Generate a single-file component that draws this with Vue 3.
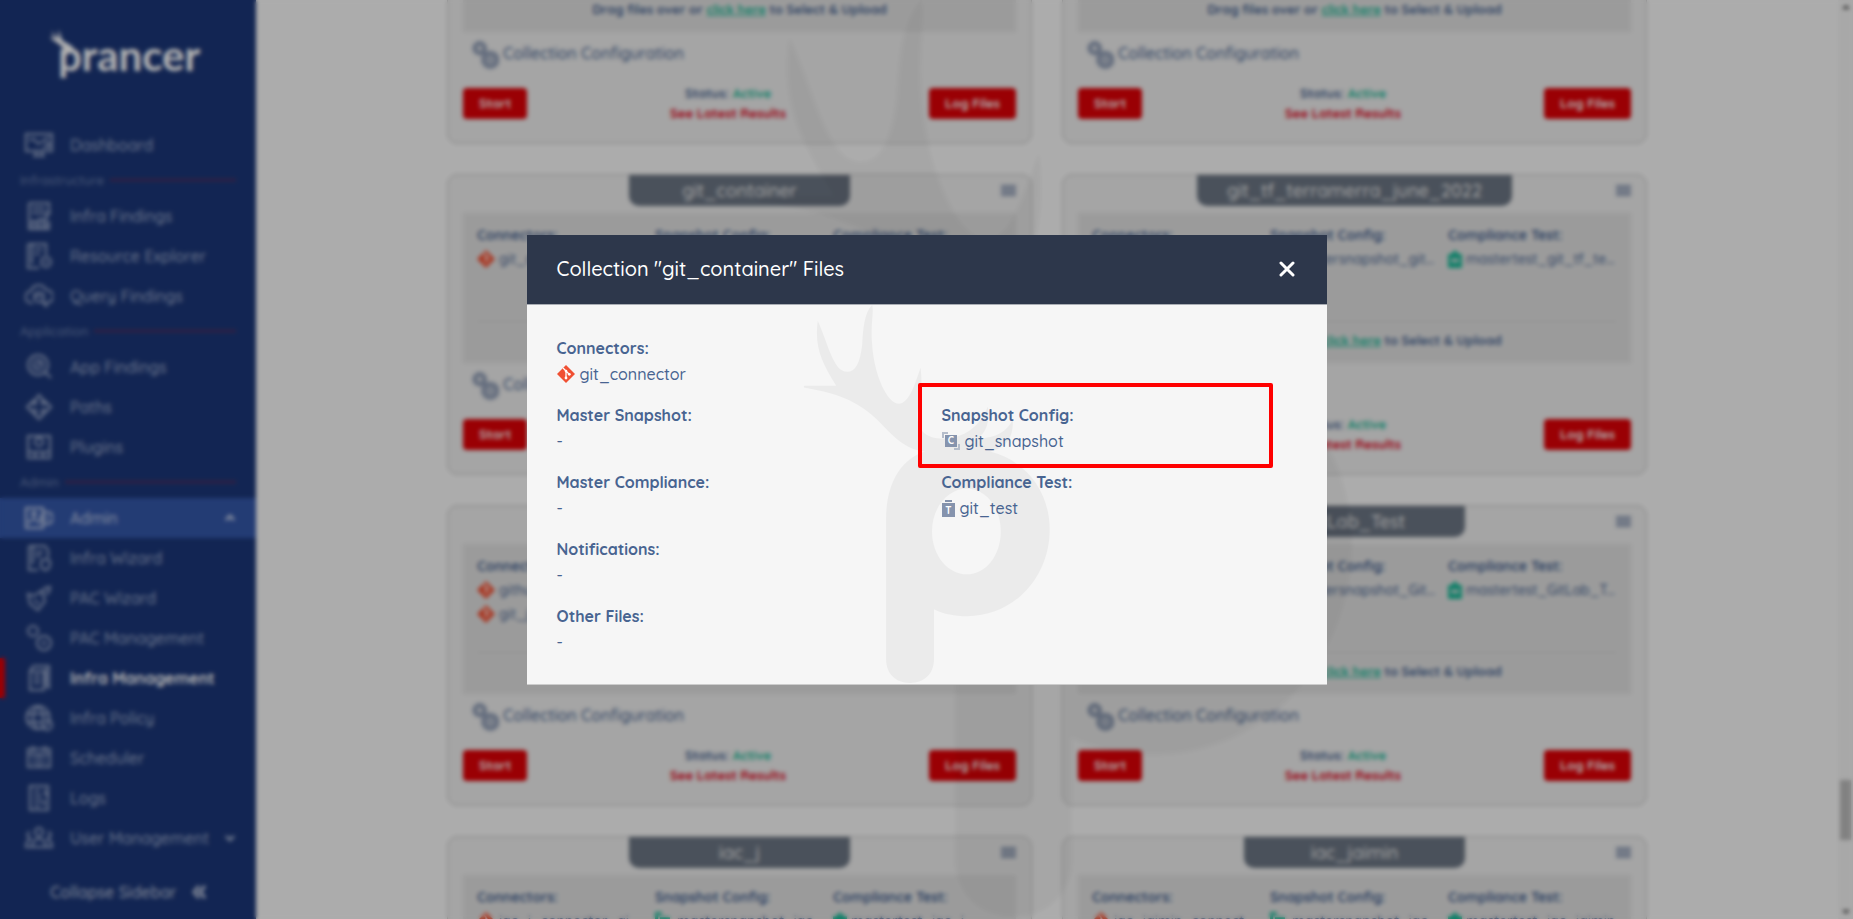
<template>
  <div class="page">
    <aside class="sidebar">
      <div class="brand">
        <svg class="antler" viewBox="0 0 26 26" aria-hidden="true">
          <path d="M0 7L6 8C3 6 2 4 2 1C4 4 6 7 9 8C8 5 8 3 9 0C10 4 11 8 13 11C17 13 21 15 24 18L17 23C14 18 10 15 6 12C3 10 1 9 0 7Z"/>
        </svg>
        <span class="brand-name">prancer</span>
      </div>

      <nav class="nav">
        <template v-for="(n, i) in nav" :key="i">
          <div v-if="n.section" class="nav-section">
            <span>{{ n.section }}</span><hr/>
          </div>
          <a v-else href="#" class="nav-item" :class="{ open: n.open, current: n.current }">
            <svg class="nav-icon" viewBox="0 0 28 28" aria-hidden="true"><path :d="icons[n.icon]"/></svg>
            <span>{{ n.label }}</span>
            <svg v-if="n.arrow" class="nav-arrow" viewBox="0 0 12 12" aria-hidden="true">
              <path :d="n.arrow === 'up' ? 'M2 8L6 4L10 8' : 'M2 4L6 8L10 4'"/>
            </svg>
          </a>
        </template>
      </nav>

      <button type="button" class="collapse">
        Collapse Sidebar
        <svg viewBox="0 0 14 14" aria-hidden="true"><path d="M7 1L2 7L7 13M13 1L8 7L13 13"/></svg>
      </button>
    </aside>

    <main class="main">
      <div class="cards">
        <article v-for="(c, i) in cards" :key="i" class="card">
          <header class="card-head">
            <h2 class="card-title">{{ c.title }}</h2>
            <button type="button" class="menu" aria-label="Menu"><i></i><i></i><i></i></button>
          </header>

          <div class="files">
            <div class="file-cols">
              <div v-for="col in c.cols" :key="col.label">
                <h3>{{ col.label }}</h3>
                <p v-for="f in col.files" :key="f">
                  <svg v-if="col.kind === 'git'" class="git" viewBox="0 0 18 18" aria-hidden="true">
                    <path class="git-bg" d="M9 0L18 9L9 18L0 9Z"/>
                    <path class="git-line" d="M7 3L9 5V13M9 6L12 9"/>
                  </svg>
                  <svg v-else-if="col.kind === 'snap'" class="green" viewBox="0 0 18 18" aria-hidden="true">
                    <path d="M0 0H7V3H3V9H0ZM5 5H15V15H5ZM17 11V17H11V16H16V11Z"/>
                  </svg>
                  <svg v-else class="green narrow" viewBox="0 0 14 18" aria-hidden="true">
                    <path fill-rule="evenodd" d="M7 0L11 4H14V18H0V4H3ZM3 9V12H11V9Z"/>
                  </svg>
                  {{ f }}
                </p>
              </div>
            </div>
            <p class="drop">Drag files over or <a href="#">click here</a> to Select &amp; Upload</p>
          </div>

          <div class="config">
            <svg viewBox="0 0 28 28" aria-hidden="true"><path :d="icons.gears"/></svg>
            Collection Configuration
          </div>

          <footer class="card-foot">
            <button type="button" class="btn">Start</button>
            <div class="status">
              <div>Status: <b>Active</b></div>
              <a href="#">See Latest Results</a>
            </div>
            <button type="button" class="btn">Log Files</button>
          </footer>
        </article>
      </div>
      <svg class="watermark" viewBox="804 305 246 380" aria-hidden="true"><path fill-rule="evenodd" :d="deer"/></svg>
    </main>

    <div class="scrollbar" aria-hidden="true">
      <span class="up"></span>
      <span class="thumb"></span>
      <span class="down"></span>
    </div>

    <div class="overlay">
      <section class="modal" role="dialog" aria-labelledby="modal-title">
        <header class="modal-head">
          <h1 id="modal-title">Collection "git_container" Files</h1>
          <button type="button" class="close" aria-label="Close">
            <svg viewBox="0 0 16 16"><path d="M2 2L14 14M14 2L2 14"/></svg>
          </button>
        </header>
        <div class="modal-body">
          <svg class="watermark" viewBox="804 305 246 380" aria-hidden="true"><path fill-rule="evenodd" :d="deer"/></svg>
          <div v-for="g in groups" :key="g.label" class="group" :class="[g.side, { marked: g.marked }]">
            <h2>{{ g.label }}</h2>
            <p>
              <svg v-if="g.kind === 'git'" class="git" viewBox="0 0 18 18" aria-hidden="true">
                <path class="git-bg" d="M9 0L18 9L9 18L0 9Z"/>
                <path class="git-line" d="M6 3L9 6V13M9 6L12 9"/>
                <circle cx="9" cy="6" r="1.3"/><circle cx="9" cy="13" r="1.4"/><circle cx="12.3" cy="9.3" r="1.4"/>
              </svg>
              <svg v-else-if="g.kind === 'snap'" class="snap" viewBox="0 0 18 18" aria-hidden="true">
                <path class="corner" d="M1 6V1H6M12 17H17V12"/>
                <path d="M3 3H15V15H3Z"/>
                <text x="9" y="12">C</text>
              </svg>
              <svg v-else-if="g.kind === 'test'" class="snap narrow" viewBox="0 0 13 18" aria-hidden="true">
                <path d="M3 1H10V3H3ZM0 4H13V18H0Z"/>
                <text x="6.5" y="15">T</text>
              </svg>
              {{ g.value }}
            </p>
          </div>
        </div>
      </section>
    </div>
  </div>
</template>

<script setup>
const icons = {
  dashboard: 'M1 3H27V20H1ZM11 20V25M17 20V25M8 25H20M4 9L9 8L13 13L18 10L24 6M20 12H24V16H18',
  findings: 'M4 1H24V10M4 1V27H24V19M7 6H20M7 11H26M7 26V19H11V26M14 26V17H18V26M21 26V14H24',
  explorer: 'M3 2H21V13M3 2V26H14M7 2V22M10 7H17M10 12H15M21 15A5 5 0 1 0 21 25A5 5 0 1 0 21 15M19 20H23',
  query: 'M8 21H7A6 6 0 0 1 6 9A8 8 0 0 1 21 8A6 6 0 0 1 22 21H19M14 10A5 5 0 1 0 14 20A5 5 0 1 0 14 10M17 19L22 25M10 14H17',
  app: 'M13 2A10 10 0 1 0 13 22A10 10 0 1 0 13 2M13 7A5 5 0 1 0 13 17A5 5 0 1 0 13 7M11 14L17 8M20 19L26 25',
  paths: 'M14 2L19 8H17V11H21V9L26 14L21 19V17H17V21H19L14 26L9 21H11V17H7V19L2 14L7 9V11H11V8H9Z',
  plugins: 'M3 3H25V25H3ZM14 5A4 4 0 1 0 14 13A4 4 0 1 0 14 5M3 19H25M10 20V24M18 20V24',
  admin: 'M1 4H18V24H1ZM9 8A2 2 0 1 0 9 12A2 2 0 1 0 9 8M4 20C4 14 14 14 14 20M22 8A6 6 0 1 0 22 20A6 6 0 1 0 22 8M22 12V16',
  infra: 'M4 2H20L23 6V14M4 2V26H13M8 2V20M11 8H18M11 12H16M16 17L20 15L25 17V21C25 24 22 26 20 26C17 25 16 23 16 21Z',
  pac: 'M3 10L9 12L16 7L20 17L13 26L5 20ZM17 9L20 4L25 3L24 8L20 11M9 16L14 20',
  gears: 'M8 2A5 5 0 1 0 8 12A5 5 0 1 0 8 2M19 12A7 7 0 1 0 19 26A7 7 0 1 0 19 12M19 18A1 1 0 1 0 19 20A1 1 0 1 0 19 18',
  manage: 'M8 2H24V25M8 2L5 7V26H19V7H5M19 22H24M9 11H15M9 15H15M9 19H15M21 4V20',
  policy: 'M13 2A11 11 0 1 0 13 25A11 11 0 1 0 13 2M2 10H24M2 18H18M13 2C6 9 6 18 13 25M13 2C18 7 19 12 18 16M22 16A5 5 0 1 0 22 26A5 5 0 1 0 22 16',
  scheduler: 'M3 5H25V23H3ZM3 10H25M8 2V8M20 2V8M7 14H11M17 14H21M7 19H11M17 19H21M14 10V23',
  logs: 'M5 2H23V26H5ZM9 7H15M9 12H17M9 17H17M9 22H15M19 6L22 12M19 16V22',
  users: 'M14 4A4 4 0 1 0 14 12A4 4 0 1 0 14 4M7 23C7 12 21 12 21 23ZM5 8A3 3 0 1 0 6 14M23 8A3 3 0 1 1 22 14M7 23H1C1 18 3 16 6 15M21 23H27C27 18 25 16 22 15',
}

// antlered "p" emblem used behind the page and the dialog
const deer = 'M817.5 321C814 346 821 362 836 386H805C803 386 803 388 805 388C840 394 862 403 883 426C897 441 908 450 925 452C900 460 886 485 886 520V660C886 675 896 684 910 684C924 684 934 675 934 660V610C944 615 955 617 967 617C1015 617 1050 577 1050 530C1050 493 1027 461 990 452C1005 449 1014 439 1013 420C1007 432 997 438 978 439C987 432 990 421 988 407C979 428 965 438 943 439C920 439 914 424 919 404C922 392 922 380 920.5 368C914 388 908 404 899 404C887 404 874 375 872 345C870 326 874 312 872 305C864 313 863 329 862 345C860 363 855 372 847 372C833 372 828 344 817.5 321ZM967 489C986 489 1001 508 1001 532C1001 556 986 575 967 575C948 575 932 556 932 532C932 508 948 489 967 489Z'

const nav = [
  { label: 'Dashboard', icon: 'dashboard' },
  { section: 'Infrastructure' },
  { label: 'Infra Findings', icon: 'findings' },
  { label: 'Resource Explorer', icon: 'explorer' },
  { label: 'Query Findings', icon: 'query' },
  { section: 'Application' },
  { label: 'App Findings', icon: 'app' },
  { label: 'Paths', icon: 'paths' },
  { label: 'Plugins', icon: 'plugins' },
  { section: 'Admin' },
  { label: 'Admin', icon: 'admin', open: true, arrow: 'up' },
  { label: 'Infra Wizard', icon: 'infra' },
  { label: 'PAC Wizard', icon: 'pac' },
  { label: 'PAC Management', icon: 'gears' },
  { label: 'Infra Management', icon: 'manage', current: true },
  { label: 'Infra Policy', icon: 'policy' },
  { label: 'Scheduler', icon: 'scheduler' },
  { label: 'Logs', icon: 'logs' },
  { label: 'User Management', icon: 'users', arrow: 'down' },
]

function card(title, connectors, snapshots, tests) {
  return {
    title,
    cols: [
      { label: 'Connectors:', kind: 'git', files: connectors },
      { label: 'Snapshot Config:', kind: 'snap', files: snapshots },
      { label: 'Compliance Test:', kind: 'test', files: tests },
    ],
  }
}

const cards = [
  card('', [], [], []),
  card('', [], [], []),
  card('git_container', ['git_connector'], [], []),
  card('git_tf_terramerra_june_2022', [], ['mastersnapshot_git...'], ['mastertest_git_tf_te...']),
  card('', ['github_', 'git_j'], [], []),
  card('GitLab_Test', [], ['mastersnapshot_Git...'], ['mastertest_GitLab_T...']),
  card('iac_j', ['iac_j_connector_gi...'], ['mastersnapshot_iac...'], ['mastertest_iac_j']),
  card('iac_jaimin', ['iac_jaimin_connect...'], ['mastersnapshot_iac...'], ['mastertest_iac_jaimin']),
]

const groups = [
  { label: 'Connectors:', value: 'git_connector', kind: 'git', side: 'left' },
  { label: 'Master Snapshot:', value: '-', side: 'left' },
  { label: 'Snapshot Config:', value: 'git_snapshot', kind: 'snap', side: 'right', marked: true },
  { label: 'Master Compliance:', value: '-', side: 'left' },
  { label: 'Compliance Test:', value: 'git_test', kind: 'test', side: 'right' },
  { label: 'Notifications:', value: '-', side: 'left' },
  { label: 'Other Files:', value: '-', side: 'left' },
]
</script>

<style>
body{margin:0;background:#f7f7f7;}
</style>

<style scoped>
*,.marked::after{box-sizing:border-box;}
h1,h2,h3,p{margin:0;font-weight:500;}
a{color:inherit;text-decoration:none;}
button{font:inherit;border:0;cursor:pointer;}
svg{flex:none;}
.page{display:flex;height:100vh;overflow:hidden;background:#f7f7f7;color:#486491;font-family:Quicksand,Lato,sans-serif;font-size:16px;font-weight:500;white-space:nowrap;}

/* sidebar */
.sidebar{display:flex;flex-direction:column;flex:none;width:256px;background:#1b3677;color:#98a7c8;}
.brand{display:flex;height:125px;padding:30px 0 0 50px;color:#fff;}
.brand-name{margin-left:-18px;font-family:Lato,sans-serif;font-size:42px;line-height:50px;font-weight:700;}
.antler{width:26px;height:26px;fill:#fff;}
.nav-item{display:flex;align-items:center;height:40px;padding:0 20px 0 25px;border-left:0 solid #dd0006;}
.nav-item span{flex:1;}
.nav-icon{width:28px;height:28px;margin-right:17px;fill:none;stroke:currentColor;stroke-width:2;}
.nav-arrow{width:12px;height:12px;fill:none;stroke:currentColor;stroke-width:3;}
.open{background:#3356a7;color:#c0cbe4;}
.current{border-left-width:5px;padding-left:20px;font-weight:700;}
.current span{color:#fff;}
.nav-section{display:flex;align-items:center;gap:6px;height:31px;padding:0 20px 2px;font-size:13px;color:#6c80ad;}
.nav-section hr{flex:1;margin:0;border:0;border-top:2px solid #5a2a55;}
.collapse{display:flex;align-items:center;gap:16px;height:54px;margin-top:auto;padding:0 50px;background:none;color:#bcc5da;}
.collapse svg{width:14px;height:14px;fill:none;stroke:currentColor;stroke-width:3;}

/* card grid, scrolled part of the way down */
.main{position:relative;flex:1;min-width:0;overflow:hidden;}
.cards{display:grid;grid-template-columns:repeat(2,minmax(0,1fr));gap:30px;width:100%;max-width:1200px;margin:-157px auto 0;}
.card{height:301px;padding:0 15px;border:1px solid #c4c4c4;border-radius:10px;background:#ececec;}
.card-head{display:grid;grid-template-columns:1fr auto 1fr;align-items:start;height:38px;}
.card-title{grid-column:2;min-width:221px;height:31px;padding:0 30px;border-radius:0 0 10px 10px;background:#6b7583;color:#e6e6e6;font-size:18px;line-height:31px;text-align:center;}
.menu{justify-self:end;display:grid;gap:1px;width:15px;margin-top:10px;padding:0;background:none;}
.menu i{height:3px;background:#8f9cb4;}
.files{height:150px;padding:10px 14px 0;background:#dfdfdf;}
.file-cols{display:grid;grid-template-columns:repeat(3,minmax(0,1fr));gap:9px;height:99px;border-bottom:1px solid #cecece;font-size:14px;line-height:24px;}
.file-cols h3{font-size:14px;font-weight:700;}
.file-cols p{display:flex;align-items:center;gap:4px;}
.file-cols svg{width:18px;height:18px;}
.file-cols .narrow{width:14px;}
.green{fill:#1db898;}
.git-bg{fill:#f05033;}
.git-line{fill:none;stroke:#fff;stroke-width:1.3;}
.git circle{fill:#fff;}
.drop{font-size:13px;line-height:36px;font-weight:700;text-align:center;}
.drop a{color:#1db898;text-decoration:underline;}
.config{display:flex;align-items:center;gap:4px;height:42px;padding-left:9px;}
.config svg{width:27px;height:28px;margin-top:4px;fill:none;stroke:#8f9cb4;stroke-width:5;}
.card-foot{display:flex;align-items:center;justify-content:space-between;height:40px;margin-top:9px;font-size:13px;font-weight:700;}
.btn{height:31px;padding:0 16px;border-radius:4px;background:#dd0006;color:#fff;}
.status{line-height:20px;text-align:center;}
.status b{color:#1db898;}
.status a{color:#dd0018;}
.watermark{position:absolute;top:0;left:0;width:100%;height:100%;fill:#000;opacity:.04;pointer-events:none;}
/* centred over the scrollbar gutter too */
.main .watermark{width:calc(100% + 15px);opacity:.03;}

.scrollbar{display:flex;flex-direction:column;align-items:center;flex:none;width:15px;padding:5px 0;background:#f1f1f1;}
.scrollbar .up{border:4px solid transparent;border-top:0;border-bottom-color:#505050;}
.scrollbar .down{border:4px solid transparent;border-bottom:0;border-top-color:#505050;}
.thumb{width:11px;height:60px;margin:auto 0 70px;background:#b9b9b9;}

/* dialog */
.overlay{position:fixed;inset:0;display:flex;align-items:center;justify-content:center;background:rgba(0,0,0,.3);backdrop-filter:blur(2px);}
.modal{width:800px;max-width:100%;}
.modal-head{display:flex;align-items:center;justify-content:space-between;height:69px;padding:0 30px;background:#2d374b;color:#fff;}
.modal-head h1{font-size:20px;line-height:30px;}
.close{width:20px;height:20px;padding:2px;background:none;}
.close svg{display:block;width:16px;height:16px;fill:none;stroke:#fff;stroke-width:3;stroke-linecap:round;}
.modal-body{position:relative;display:grid;grid-template-columns:1fr 1fr;gap:15px 30px;padding:30px 30px 29px;border-top:1px solid #a9adb4;border-bottom:1px solid #ccc;background:#f6f6f6;line-height:26px;}
.group{position:relative;height:52px;}
.left{grid-column:1;}
.right{grid-column:2;}
.group h2{font-size:16px;font-weight:700;}
.group p{display:flex;align-items:center;gap:5px;}
.group svg{width:18px;height:18px;}
.group .narrow{width:13px;}
.snap{fill:#8593ad;}
.snap .corner{fill:none;stroke:#b5bdcb;stroke-width:2;}
.snap text{fill:#fff;font-size:10px;font-weight:700;text-anchor:middle;}
.marked::after{content:"";position:absolute;top:-19px;left:-24px;width:100%;height:85px;border:4px solid #f00;border-radius:2px;}
</style>
